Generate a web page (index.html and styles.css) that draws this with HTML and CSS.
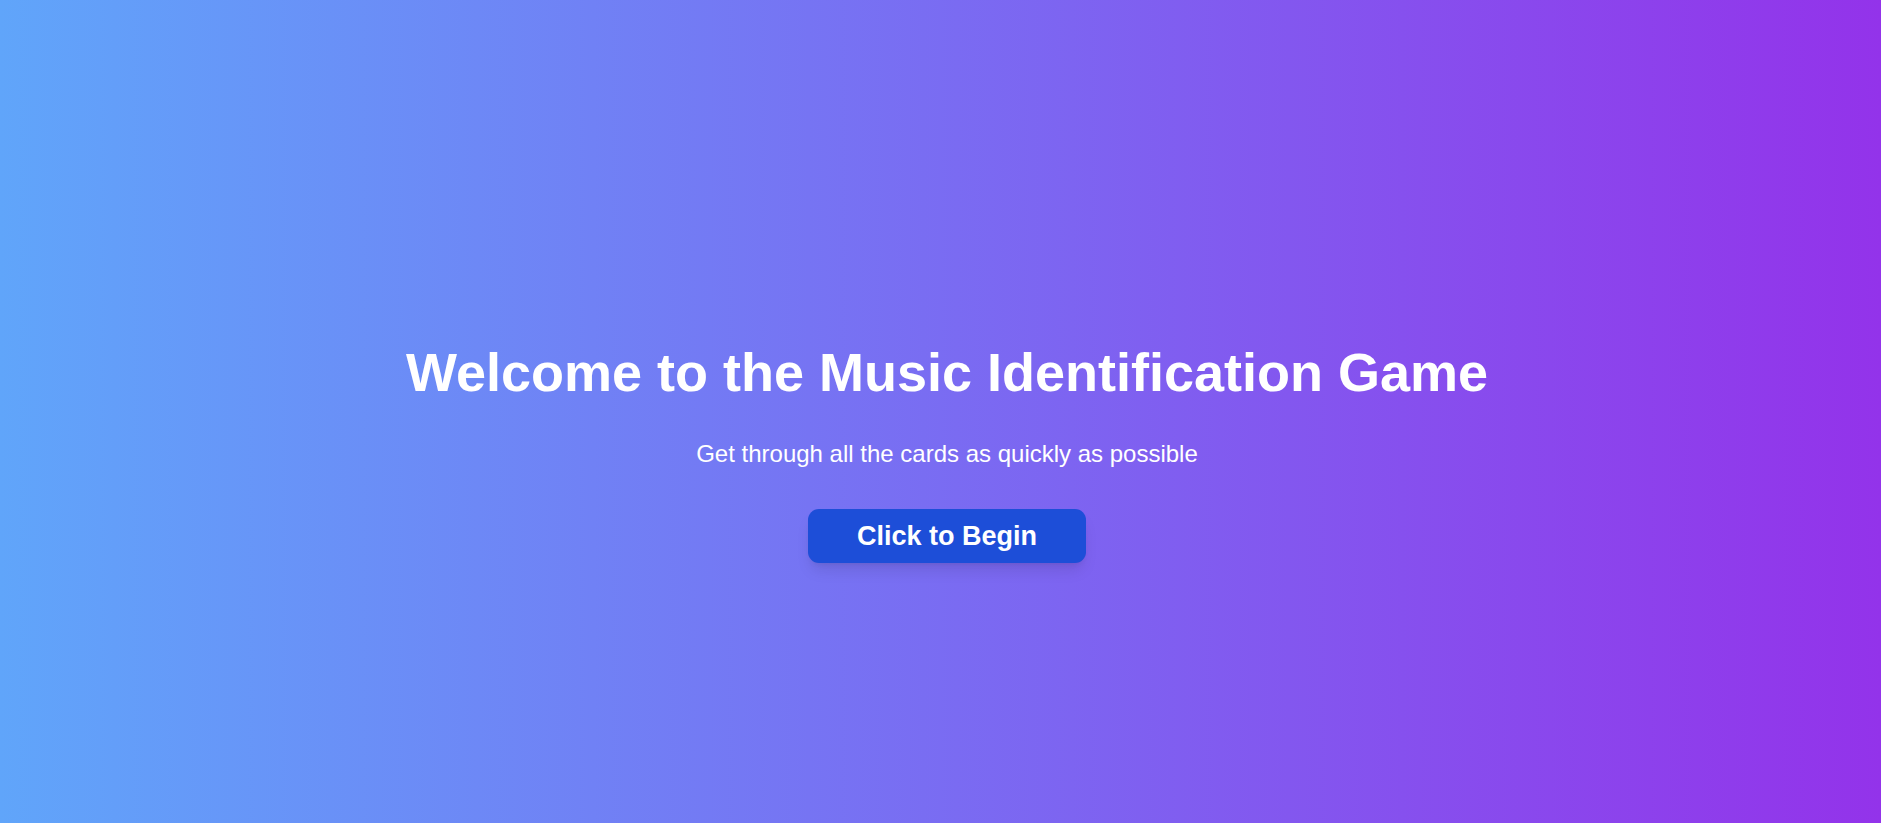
FILE: index.html
```html
<!DOCTYPE html>
<html lang="en">
<head>
<meta charset="utf-8">
<title>Music Identification Game</title>
<link rel="stylesheet" href="styles.css">
</head>
<body>
<main class="screen">
  <h1 class="title">Welcome to the Music Identification Game</h1>
  <p class="subtitle">Get through all the cards as quickly as possible</p>
  <button class="begin">Click to Begin</button>
</main>
</body>
</html>
```

FILE: styles.css
```css
html, body {
  margin: 0;
  padding: 0;
  height: 100%;
}
body {
  font-family: "Liberation Sans", Arial, sans-serif;
  color: #fff;
}
.screen {
  box-sizing: border-box;
  min-height: 100vh;
  padding: 84px 0 0 13px;
  display: flex;
  flex-direction: column;
  align-items: center;
  justify-content: center;
  background: linear-gradient(to right, #60a5fa, #9333ea);
}
.title {
  margin: 0 0 39px;
  font-size: 54px;
  font-weight: 700;
  line-height: 54px;
}
.subtitle {
  margin: 0 0 39px;
  font-size: 24px;
  line-height: 32px;
}
.begin {
  font-family: inherit;
  font-size: 27px;
  font-weight: 700;
  color: #fff;
  background: #1d4ed8;
  border: none;
  border-radius: 11px;
  padding: 12px 49px;
  line-height: 30px;
  box-shadow: 0 10px 15px -3px rgba(0,0,0,0.1), 0 4px 6px -4px rgba(0,0,0,0.1);
  cursor: pointer;
}
```
